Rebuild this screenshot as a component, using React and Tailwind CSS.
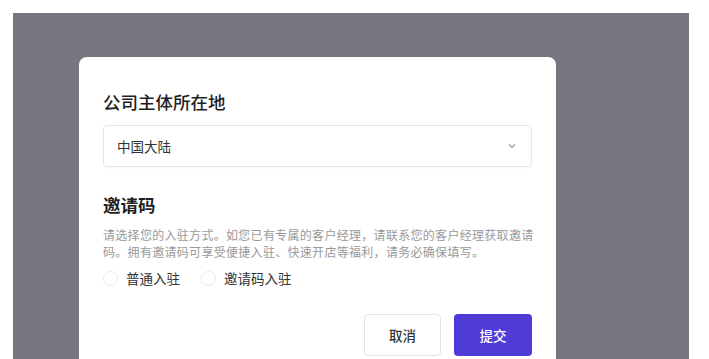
import React from "react";

const App = () => {
  return (
    <div
      className="w-full h-[359px] bg-white pl-[13px] pt-[13px] pr-[20px] overflow-hidden"
      style={{ fontFamily: '"Noto Sans CJK SC", "Noto Sans", sans-serif' }}
    >
      <div className="w-full h-full bg-[#77767e] overflow-hidden pl-[66px] pt-[44px]">
        <div className="w-[477px] h-[340px] bg-white rounded-[8px] px-6 pt-[33px]">
          <h2 className="text-[17.5px] leading-6 font-medium text-[#1f1f1f]">
            公司主体所在地
          </h2>
          <div className="mt-[11px] h-[42px] border border-[#e6e6e6] rounded-[4px] flex items-center justify-between pl-[13px] pr-[14px] shadow-[0_1px_2px_rgba(0,0,0,0.03)]">
            <span className="text-[13.5px] text-[#333]">中国大陆</span>
            <svg width="10" height="10" viewBox="0 0 10 10" fill="none">
              <path d="M2 3.5 L5 6.5 L8 3.5" stroke="#9a9a9a" strokeWidth="1.1" />
            </svg>
          </div>
          <h2 className="mt-[26px] text-[17.5px] leading-6 font-bold text-[#1f1f1f]">
            邀请码
          </h2>
          <p className="mt-[9px] text-[12px] leading-[17px] tracking-[0.3px] text-[#999] whitespace-nowrap">
            请选择您的入驻方式。如您已有专属的客户经理，请联系您的客户经理获取邀请
            <br />
            码。拥有邀请码可享受便捷入驻、快速开店等福利，请务必确保填写。
          </p>
          <div className="mt-[8px] h-5 flex items-center gap-[11px] text-[13.5px] text-[#333]">
            <label className="flex items-center gap-[8px]">
              <span className="w-[15px] h-[15px] rounded-full border border-[#ebebeb]" />
              <span>普通入驻</span>
            </label>
            <label className="flex items-center gap-[8px] ml-[10px]">
              <span className="w-[15px] h-[15px] rounded-full border border-[#ebebeb]" />
              <span>邀请码入驻</span>
            </label>
          </div>
          <div className="mt-[26px] flex justify-end gap-[13px]">
            <button className="w-[77px] h-[42px] border border-[#e3e3e3] rounded-[4px] bg-white text-[13.5px] font-medium text-[#333]">
              取消
            </button>
            <button className="w-[78px] h-[42px] rounded-[4px] bg-[#4f3cd6] text-[13.5px] font-medium text-white">
              提交
            </button>
          </div>
        </div>
      </div>
    </div>
  );
};

export default App;
